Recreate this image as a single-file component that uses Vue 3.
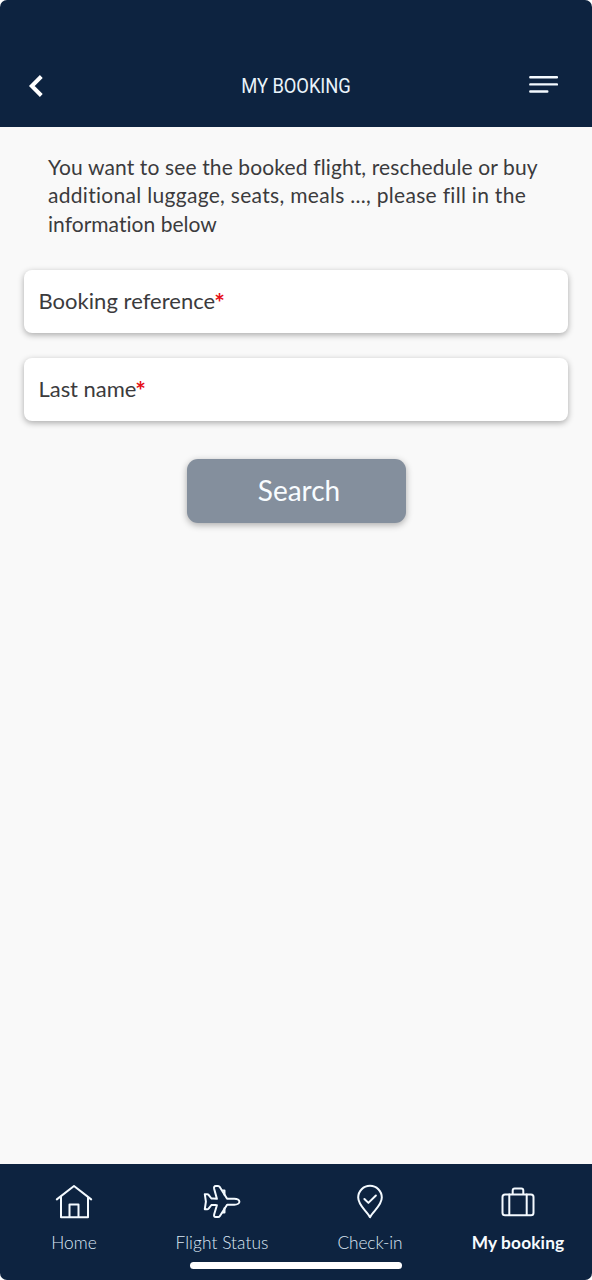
<script setup>
const intro = [
  { text: 'You want to see the booked flight, reschedule or buy', cls: 'l1' },
  { text: 'additional luggage, seats, meals ..., please fill in the', cls: 'l2' },
  { text: 'information below', cls: 'l3' },
]
const fields = [
  { label: 'Booking reference', cls: 'ref' },
  { label: 'Last name', cls: 'name' },
]
</script>

<template>
  <div class="screen">
    <header class="header">
      <svg class="back" width="16" height="24" viewBox="0 0 16 24"><path d="M13.3 2.5 3.8 12l9.5 9.5" /></svg>
      <h1 class="title"><span>MY BOOKING</span></h1>
      <svg class="menu" width="30" height="20" viewBox="0 0 30 20"><path d="M1.3 2.2h26.6M1.3 9.4h26.6M1.3 16.5h17" /></svg>
    </header>

    <main class="main">
      <p class="intro"><span v-for="l in intro" :key="l.cls" class="line" :class="l.cls">{{ l.text }}</span></p>
      <div class="fields">
        <div v-for="f in fields" :key="f.cls" class="field"><span :class="f.cls">{{ f.label }}</span><b class="req">*</b></div>
      </div>
      <button class="search"><span>Search</span></button>
    </main>

    <nav class="tabs">
      <a class="tab">
        <svg width="40" height="40" viewBox="0 0 40 40">
          <path d="M2.8 16.4 20 3l17.2 13.4M7 14v20.2h27V14M15.5 34V21.6h9V34" />
        </svg>
        <span class="home">Home</span>
      </a>
      <a class="tab">
        <svg width="40" height="40" viewBox="0 0 40 40">
          <path d="M14.9 15.8 12.2 6c-.5-2 .2-2.9 1.6-2.9h2.3c.8 0 1.3.4 1.8 1.1l7.2 11.5h7.2c3.1 0 5.1 1.5 5.1 3s-2 3-5.1 3h-7.2L17.9 33c-.5.8-1 1.1-1.8 1.1h-2.3c-1.4 0-2.1-.9-1.6-2.8l2.7-9.1c-2-.1-4.1-.3-5.5-.2l-2.8 3.6c-.4.4-.8.6-1.4.6H2.8l1.1-7.5-1.1-7.5h2.4c.6 0 1 .2 1.4.6l2.8 3.7c1.4.1 3.5 0 5.5.3Z" />
          <path d="M20.8 7.6h1.7v4.2M20.8 29.5h1.7v-4.2" />
        </svg>
        <span class="flight">Flight Status</span>
      </a>
      <a class="tab">
        <svg width="40" height="40" viewBox="0 0 40 40">
          <path d="M20 34.2C17 28 8.2 22.9 8.2 14.6a11.8 11.8 0 0 1 23.6 0C31.8 22.9 23 28 20 34.2ZM14.4 16l4 3.9 7.5-7.4" />
        </svg>
        <span class="check">Check-in</span>
      </a>
      <a class="tab active">
        <svg width="40" height="40" viewBox="0 0 40 40">
          <rect x="4.5" y="11.5" width="31" height="20.8" rx="2.5" />
          <path d="M11.3 11.5v20.5M28.7 11.5v20.5M14.7 11V7.6a2 2 0 0 1 2-2h6.6a2 2 0 0 1 2 2V11" />
        </svg>
        <span class="book">My booking</span>
      </a>
      <i class="indicator"></i>
    </nav>
  </div>
</template>

<style>
body {
  background: #fff;
}
</style>

<style scoped>
.screen {
  display: flex;
  flex-direction: column;
  width: 592px;
  height: 1280px;
  overflow: hidden;
  border-radius: 7px;
  background: #f9f9f9;
  font-family: Lato, "Open Sans", sans-serif;
  color: #3b3b3d;
}
svg {
  fill: none;
  stroke: #f4faff;
  stroke-width: 2;
  stroke-linejoin: round;
  stroke-linecap: round;
}
.header {
  display: grid;
  grid-template-columns: 80px 1fr 80px;
  align-items: center;
  height: 127px;
  padding-top: 44px;
  box-sizing: border-box;
  background: #0d2340;
}
.back {
  margin-left: 28px;
  stroke: #fff;
  stroke-width: 4;
  stroke-linecap: butt;
  stroke-linejoin: miter;
}
.title {
  margin: 2px 0 0;
  font: 400 19.5px/24px Roboto, sans-serif;
  text-align: center;
  color: #e9f3fa;
}
.title span {
  display: inline-block;
  letter-spacing: -0.1px;
  transform: scaleX(0.942);
}
.menu {
  margin: 0 0 2px 17px;
  stroke-width: 2.4;
}
.main {
  display: flex;
  flex-direction: column;
  flex: 1;
  padding: 26px 24px 0;
}
.intro {
  margin: 0 24px;
  font-size: 21px;
  line-height: 28.3px;
}
.line {
  display: block;
  width: max-content;
  white-space: nowrap;
}
.l1 { letter-spacing: 0.13px; }
.l2 { letter-spacing: 0.3px; }
.l3 { letter-spacing: 0.03px; }
.fields {
  display: flex;
  flex-direction: column;
  gap: 25px;
  margin-top: 32px;
}
.field {
  height: 63px;
  padding-left: 14.5px;
  border-radius: 8px;
  background: #fff;
  box-shadow: 0 2px 6px rgba(0, 0, 0, 0.32);
  font-size: 22px;
  line-height: 61px;
}
.ref {
  letter-spacing: 0.03px;
}
.name {
  letter-spacing: -0.05px;
}
.req {
  color: #e60f17;
  font-size: 25px;
  font-weight: 700;
  line-height: 0;
  vertical-align: -3px;
  margin-left: -1px;
}
.search {
  align-self: center;
  width: 219px;
  height: 64px;
  margin-top: 38px;
  padding: 0 0 2px 6px;
  border: 0;
  border-radius: 11px;
  background: #848f9d;
  box-shadow: 0 2px 7px rgba(0, 0, 0, 0.32);
  font: 400 28px/60px Lato, sans-serif;
  color: #f8fcff;
}
.tabs {
  position: relative;
  display: grid;
  grid-template-columns: repeat(4, 1fr);
  height: 116px;
  background: #0d2340;
}
.tab {
  display: flex;
  flex-direction: column;
  align-items: center;
  padding-top: 19px;
  font-size: 17.3px;
  line-height: 24px;
  font-weight: 300;
  color: #dce8f5;
}
.tab span {
  margin-top: 8px;
  white-space: nowrap;
}
.tab .check {
  letter-spacing: -0.1px;
}
.tab .flight {
  letter-spacing: 0.08px;
}
.tab .book {
  letter-spacing: 0.15px;
}
.active {
  font-weight: 700;
  color: #f6fbff;
}
.indicator {
  position: absolute;
  left: 190px;
  bottom: 11px;
  width: 212px;
  height: 7px;
  border-radius: 4px;
  background: #fff;
}
</style>
